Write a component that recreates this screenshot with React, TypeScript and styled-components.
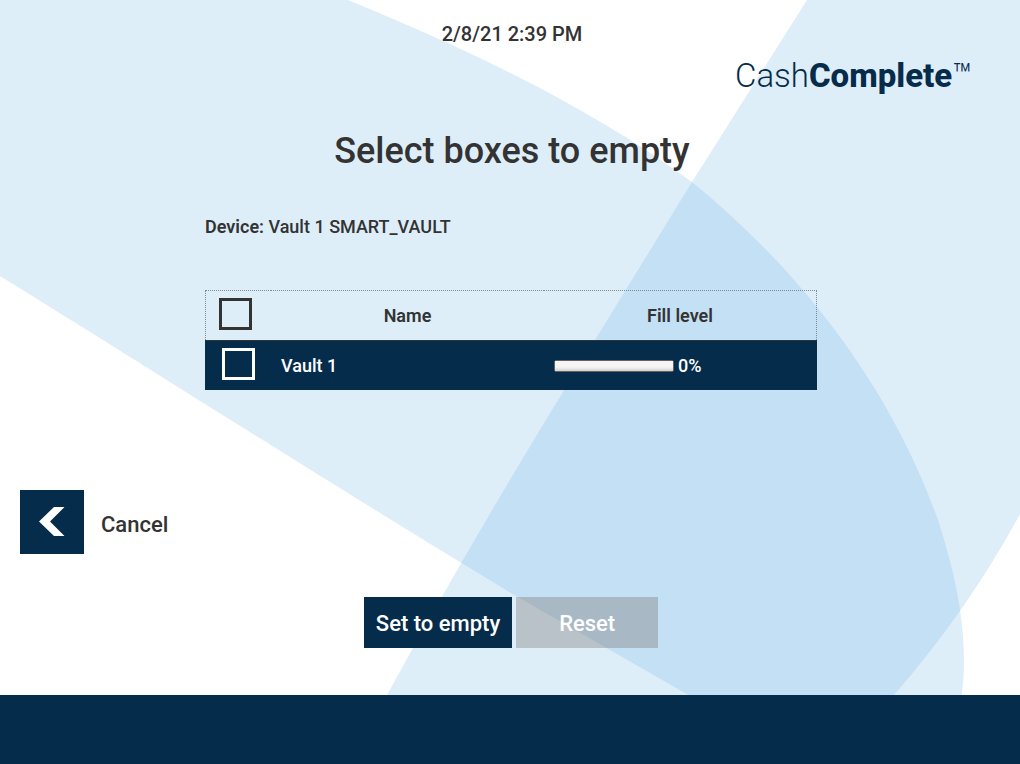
import React, { useState } from "react";
import styled, { createGlobalStyle } from "styled-components";

const navy = "#052c4b";
const ink = "#333333";

const GlobalStyle = createGlobalStyle`
  * { box-sizing: border-box; }
  body {
    margin: 0;
    background: #ffffff;
    color: ${ink};
    font-family: Roboto, "Liberation Sans", sans-serif;
    font-weight: 500;
  }
`;

const Page = styled.div`
  position: relative;
  isolation: isolate;
  display: flex;
  flex-direction: column;
  min-height: 100vh;
`;

const Backdrop = styled.svg`
  position: absolute;
  inset: 0;
  width: 100%;
  height: 100%;
  z-index: -1;
`;

const Header = styled.header`
  display: flex;
  flex-direction: column;
  padding-top: 22px;
`;

const Clock = styled.time`
  align-self: center;
  padding-left: 4px;
  font-size: 20px;
  line-height: 24px;
`;

const Logo = styled.div`
  display: flex;
  align-self: flex-end;
  margin: 9px 48px 0 0;
  color: ${navy};
  font-size: 33px;
  line-height: 42px;
  font-weight: 300;
`;

const LogoStrong = styled.span`
  font-weight: 800;
`;

const LogoMark = styled.span`
  font-size: 32px;
  line-height: 40px;
`;

const Main = styled.main`
  flex: 1;
  display: flex;
  flex-direction: column;
`;

const Title = styled.h1`
  margin: 32px 0 0;
  padding-left: 4px;
  text-align: center;
  font-size: 36px;
  line-height: 44px;
  font-weight: 500;
`;

const Content = styled.section`
  align-self: center;
  width: 60%;
  margin: 43px 0 0 2px;
`;

const Device = styled.p`
  margin: 0;
  font-size: 18px;
  line-height: 22px;
`;

const DeviceLabel = styled.strong`
  font-weight: 600;
`;

const BoxTable = styled.table`
  width: 100%;
  margin-top: 52px;
  border-collapse: separate;
  border-spacing: 0;
  table-layout: fixed;
  font-size: 18px;
  line-height: 22px;
`;

const TickCol = styled.col`
  width: 66px;
`;

const HeadCell = styled.th`
  height: 50px;
  padding: 0;
  border: 0 dotted #7f8a92;
  border-top-width: 1px;
  font-weight: 600;
  text-align: center;
  &:first-child {
    border-left-width: 1px;
  }
  &:last-child {
    border-right-width: 1px;
  }
`;

const HeadTickCell = styled(HeadCell)`
  padding-left: 13px;
`;

const BodyRow = styled.tr`
  background: ${navy};
  color: #ffffff;
`;

const Cell = styled.td`
  height: 50px;
  padding: 0 10px;
  border-top: 1px solid ${ink};
`;

const TickCell = styled(Cell)`
  padding: 0 0 0 17px;
`;

const Tick = styled.input<{ $tone: string }>`
  appearance: none;
  display: block;
  width: 33px;
  height: 32px;
  margin: 0 0 3px;
  border: 3px solid ${(p) => p.$tone};
  &:checked {
    background: ${(p) => p.$tone};
    background-clip: content-box;
    padding: 4px;
  }
`;

const Level = styled.label`
  display: flex;
  align-items: center;
  gap: 4px;
`;

const LevelBar = styled.progress`
  appearance: none;
  width: 120px;
  height: 12px;
  border: 1px solid #66625c;
  border-radius: 2px;
  background: linear-gradient(#f6f6f6 60%, #d2d2d2);
  &::-webkit-progress-bar {
    background: linear-gradient(#f6f6f6 60%, #d2d2d2);
  }
  &::-webkit-progress-value {
    background: #4b9cd3;
  }
`;

const CancelButton = styled.button`
  align-self: flex-start;
  display: flex;
  align-items: center;
  gap: 17px;
  margin: 100px 0 0 20px;
  padding: 0;
  border: 0;
  background: none;
  color: ${ink};
  font: inherit;
  font-size: 22px;
  line-height: 28px;
`;

const CancelTile = styled.span`
  display: block;
  width: 64px;
  height: 64px;
  background: ${navy};
`;

const CancelText = styled.span`
  padding-top: 5px;
`;

const Actions = styled.div`
  display: flex;
  justify-content: center;
  gap: 4px;
  margin: 43px 0 47px;
  padding-left: 2px;
`;

const ActionButton = styled.button`
  min-width: 142px;
  height: 51px;
  padding: 2px 12px 0;
  border: 0;
  background: ${navy};
  color: #ffffff;
  font: inherit;
  font-size: 22px;
  line-height: 28px;
  &:disabled {
    background: rgba(128, 128, 128, 0.4);
  }
`;

const Footer = styled.footer`
  height: 69px;
  background: ${navy};
`;

export default function App() {
  const [picked, setPicked] = useState(false);
  const toggle = () => setPicked(!picked);

  return (
    <Page>
      <GlobalStyle />
      <Backdrop viewBox="0 0 1020 764" preserveAspectRatio="xMidYMid slice" aria-hidden="true">
        <g fill="rgb(99,177,227)" fillOpacity="0.212">
          <path d="M0 0H348C470 50 590 107 692 182C800 270 890 385 938 520C956 575 964 620 964 660C964 675 963 685 961 700V764H800L690 696L516 596C340 490 160 375 0 276Z" />
          <path d="M807 0L692 182L595 340Q480 525 387 695L350 764H830L894 695Q968 610 1020 514V0Z" />
        </g>
      </Backdrop>
      <Header>
        <Clock>2/8/21 2:39 PM</Clock>
        <Logo>
          <span>Cash</span>
          <LogoStrong>Complete</LogoStrong>
          <LogoMark>™</LogoMark>
        </Logo>
      </Header>
      <Main>
        <Title>Select boxes to empty</Title>
        <Content>
          <Device>
            <DeviceLabel>Device:</DeviceLabel> Vault 1 SMART_VAULT
          </Device>
          <BoxTable>
            <colgroup>
              <TickCol />
              <col />
              <col />
            </colgroup>
            <thead>
              <tr>
                <HeadTickCell>
                  <Tick type="checkbox" $tone={ink} aria-label="Select all boxes" checked={picked} onChange={toggle} />
                </HeadTickCell>
                <HeadCell scope="col">Name</HeadCell>
                <HeadCell scope="col">Fill level</HeadCell>
              </tr>
            </thead>
            <tbody>
              <BodyRow>
                <TickCell>
                  <Tick type="checkbox" $tone="#ffffff" aria-label="Select Vault 1" checked={picked} onChange={toggle} />
                </TickCell>
                <Cell>Vault 1</Cell>
                <Cell>
                  <Level>
                    <LevelBar value={0} max={100} />
                    0%
                  </Level>
                </Cell>
              </BodyRow>
            </tbody>
          </BoxTable>
        </Content>
        <CancelButton type="button">
          <CancelTile>
            <svg width="64" height="64" viewBox="0 0 64 64" aria-hidden="true">
              <path d="M34 17H44.500L30 31.500L44.500 46H34L19 31.500Z" fill="#ffffff" />
            </svg>
          </CancelTile>
          <CancelText>Cancel</CancelText>
        </CancelButton>
        <Actions>
          <ActionButton type="button">Set to empty</ActionButton>
          <ActionButton type="button" disabled>
            Reset
          </ActionButton>
        </Actions>
      </Main>
      <Footer />
    </Page>
  );
}
